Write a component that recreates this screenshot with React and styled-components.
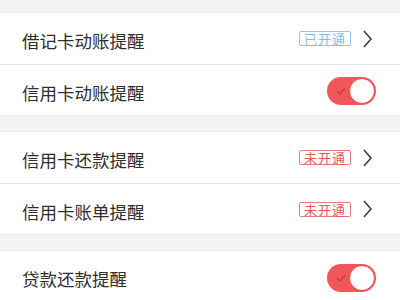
import React from 'react'
import styled, { createGlobalStyle } from 'styled-components'

const GlobalStyle = createGlobalStyle`
  html, body {
    margin: 0;
    padding: 0;
    background: #f4f4f4;
  }
  body {
    font-family: 'Noto Sans CJK SC', 'Noto Sans', sans-serif;
  }
`

const groups = [
  [
    { label: '借记卡动账提醒', kind: 'badge', on: true },
    { label: '信用卡动账提醒', kind: 'switch' },
  ],
  [
    { label: '信用卡还款提醒', kind: 'badge', on: false },
    { label: '信用卡账单提醒', kind: 'badge', on: false },
  ],
  [{ label: '贷款还款提醒', kind: 'switch' }],
]

const App = () => (
  <Page>
    <GlobalStyle />
    {groups.map((rows, i) => (
      <Group key={i}>
        {rows.map(row => (
          <Row key={row.label}>
            <Label>{row.label}</Label>
            {row.kind === 'badge' ? (
              <Side>
                <Badge $on={row.on}>{row.on ? '已开通' : '未开通'}</Badge>
                <Chevron width="9" height="18" viewBox="0 0 9 18">
                  <polyline points="1,1 8,9 1,17" />
                </Chevron>
              </Side>
            ) : (
              <Switch>
                <Tick width="10" height="8" viewBox="0 0 10 8">
                  <polyline points="1,4 4,7 9,1" />
                </Tick>
                <Knob />
              </Switch>
            )}
          </Row>
        ))}
      </Group>
    ))}
  </Page>
)

export default App

const Page = styled.div`
  width: 400px;
  height: 300px;
  overflow: hidden;
  padding-top: 12px;
  box-sizing: border-box;
`

const Group = styled.div`
  background: #fff;
  border-top: 1px solid #ececec;
  border-bottom: 1px solid #ececec;
  margin-bottom: 15px;
`

const Row = styled.div`
  height: 51px;
  box-sizing: border-box;
  display: flex;
  align-items: center;
  justify-content: space-between;
  padding: 0 24px 0 22px;

  & + & {
    border-top: 1px solid #e9e9e9;
  }
`

const Label = styled.span`
  font-size: 17.5px;
  color: #2e2e2e;
  padding-top: 4px;
`

const Side = styled.div`
  display: flex;
  align-items: center;
  gap: 12px;
  padding-right: 4px;
`

const Badge = styled.span`
  font-size: 13px;
  line-height: 13px;
  padding: 0 4px;
  border: 1px solid ${p => (p.$on ? '#8ec8ea' : '#e27a7e')};
  color: ${p => (p.$on ? '#7fbde6' : '#e0585d')};
  border-radius: 2px;
  letter-spacing: 1px;
`

const Chevron = styled.svg`
  fill: none;
  stroke: #3c3c3c;
  stroke-width: 1.6;
`

const Switch = styled.div`
  position: relative;
  width: 49px;
  height: 28px;
  border-radius: 14px;
  background: #f2565b;
  margin-top: 2px;
  display: flex;
  align-items: center;
  justify-content: flex-end;
`

const Tick = styled.svg`
  position: absolute;
  left: 9px;
  top: 10px;
  fill: none;
  stroke: #c23c40;
  stroke-width: 1.2;
`

const Knob = styled.div`
  width: 26px;
  height: 26px;
  border-radius: 50%;
  background: #fff;
  border: 1px solid #e8484e;
  box-sizing: border-box;
  margin-right: 1px;
`
